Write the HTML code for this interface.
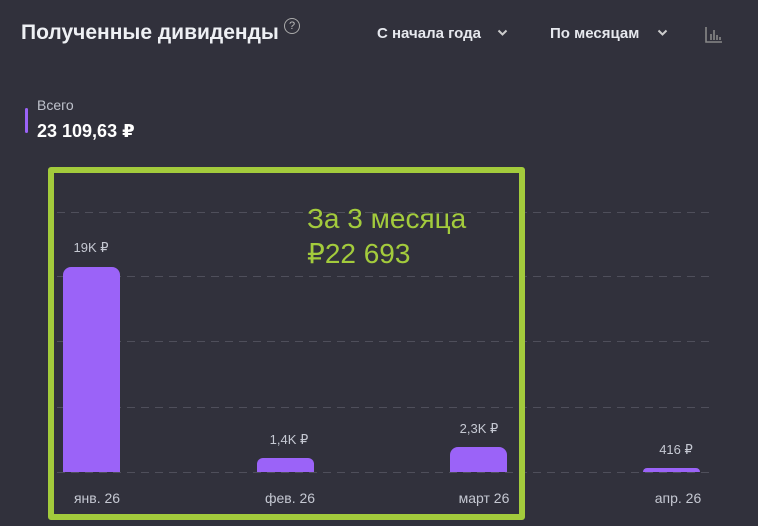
<!DOCTYPE html>
<html><head><meta charset="utf-8"><style>
body{margin:0;width:758px;height:526px;background:#31313c;font-family:"Liberation Sans","DejaVu Sans",sans-serif;position:relative;overflow:hidden;color:#fff}
.a{position:absolute;white-space:nowrap}
.g{position:absolute;left:57px;width:653px;height:1px;background:repeating-linear-gradient(90deg,#4f4f5b 0 8px,transparent 8px 14px)}
.bar{position:absolute;background:#9b63f8;border-radius:8px 8px 0 0;width:57px}
.v{position:absolute;font-size:13px;color:#c5c8d2;text-align:center;width:80px}
.x{position:absolute;font-size:14px;color:#c5c8d2;text-align:center;width:90px;top:490px}
</style></head><body>
<div class="a" style="left:21px;top:21px;font-size:21px;font-weight:bold;color:#eef0f4">Полученные дивиденды</div>
<div class="a" style="left:284px;top:18px;width:14px;height:14px;border:1px solid #aaa;border-radius:50%;font-size:11px;color:#bbb;text-align:center;line-height:14px">?</div>
<div class="a" style="left:377px;top:25px;font-size:15px;font-weight:bold;color:#e6e8ee">С начала года</div>
<svg class="a" style="left:497px;top:29px" width="11" height="8"><path d="M1.5 1.5L5.5 5.5L9.5 1.5" stroke="#ccc" stroke-width="2" fill="none"/></svg>
<div class="a" style="left:550px;top:25px;font-size:15px;font-weight:bold;color:#e6e8ee">По месяцам</div>
<svg class="a" style="left:657px;top:29px" width="11" height="8"><path d="M1.5 1.5L5.5 5.5L9.5 1.5" stroke="#ccc" stroke-width="2" fill="none"/></svg>
<svg class="a" style="left:705px;top:26px" width="18" height="18"><path d="M1 1V16H17M6 14V8M9 14V4M12 14V9M15 14V11" stroke="#888" stroke-width="1.6" fill="none"/></svg>
<div class="a" style="left:25px;top:108px;width:3px;height:25px;background:#9b63f8;border-radius:2px"></div>
<div class="a" style="left:37px;top:97px;font-size:14px;color:#bfc2cc">Всего</div>
<div class="a" style="left:37px;top:121px;font-size:18px;font-weight:bold;color:#fff">23 109,63 ₽</div>
<div class="g" style="top:212px"></div><div class="g" style="top:276px"></div><div class="g" style="top:341px"></div><div class="g" style="top:407px"></div><div class="g" style="top:472px"></div>
<div class="bar" style="left:63px;top:267px;height:205px"></div>
<div class="bar" style="left:257px;top:458px;height:14px;border-radius:6px 6px 0 0"></div>
<div class="bar" style="left:450px;top:447px;height:25px"></div>
<div class="bar" style="left:643px;top:468px;height:4px;border-radius:6px 6px 0 0"></div>
<div class="v" style="left:51px;top:240px">19K ₽</div>
<div class="v" style="left:249px;top:432px">1,4K ₽</div>
<div class="v" style="left:439px;top:421px">2,3K ₽</div>
<div class="v" style="left:636px;top:442px">416 ₽</div>
<div class="x" style="left:52px">янв. 26</div>
<div class="x" style="left:245px">фев. 26</div>
<div class="x" style="left:439px">март 26</div>
<div class="x" style="left:633px">апр. 26</div>
<div class="a" style="left:48px;top:167px;width:465px;height:341px;border:6px solid #a3cb3c;border-radius:3px"></div>
<div class="a" style="left:307px;top:203px;font-size:28px;color:#a3cb3c">За 3 месяца</div>
<div class="a" style="left:307px;top:237px;font-size:28px;color:#a3cb3c">₽22 693</div>
</body></html>
